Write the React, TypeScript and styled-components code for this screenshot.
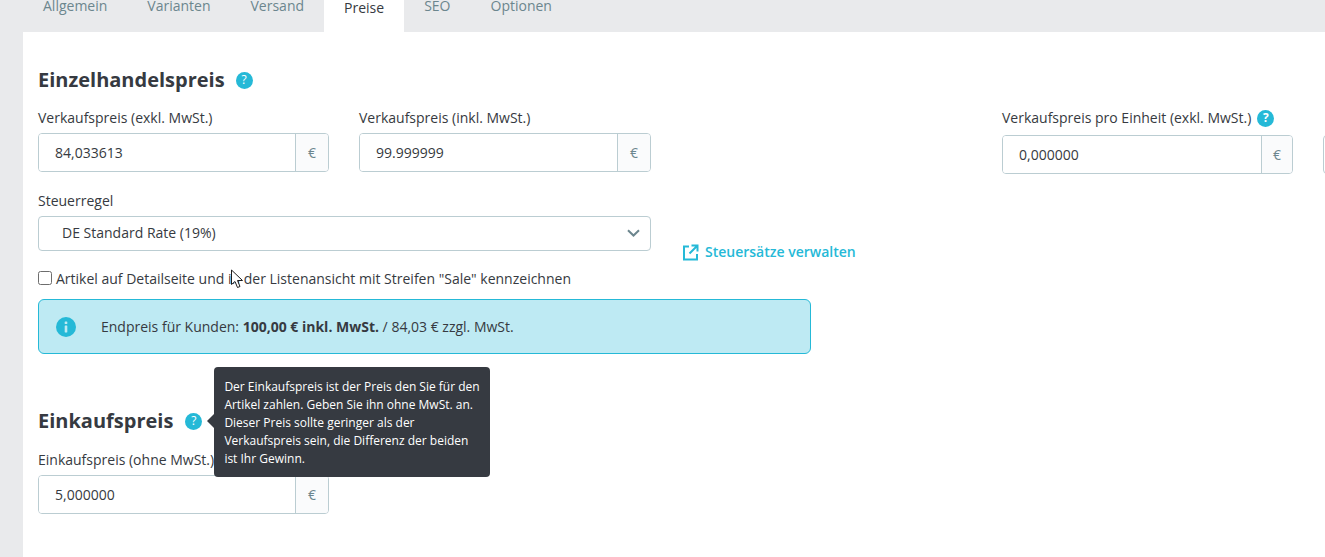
import styled, { createGlobalStyle } from "styled-components";

const GlobalStyle = createGlobalStyle`
  html, body {
    margin: 0;
    padding: 0;
    height: 557px;
    overflow: hidden;
    background: #e9eaec;
    font-family: "Open Sans", "Noto Sans", sans-serif;
    font-size: 14px;
    color: #363a41;
  }
`;

const Page = styled.div`
  width: 1325px;
  height: 557px;
  overflow: hidden;
  display: flex;
  flex-direction: column;
`;

const TabBar = styled.nav`
  display: flex;
  height: 32px;
  flex: none;
  padding-left: 23px;
  background: #e9eaec;
`;

const Tab = styled.a<{ $active?: boolean }>`
  display: block;
  height: 32px;
  padding: 0 20px;
  font-size: 14px;
  line-height: ${(p) => (p.$active ? "16px" : "11px")};
  color: ${(p) => (p.$active ? "#363a41" : "#6c868e")};
  background: ${(p) => (p.$active ? "#ffffff" : "transparent")};
`;

const Panel = styled.main`
  flex: 1;
  margin-left: 23px;
  padding: 36px 0 0 15px;
  background: #ffffff;
  overflow: hidden;
  position: relative;
`;

const HeadingRow = styled.div`
  display: flex;
  align-items: center;
  height: 24px;
`;

const Heading = styled.h2`
  margin: 0;
  font-size: 20px;
  line-height: 24px;
  font-weight: 700;
  color: #363a41;
`;

const HelpBadge = styled.span<{ $gap?: number; $bold?: boolean }>`
  position: relative;
  flex: none;
  display: inline-flex;
  align-items: center;
  justify-content: center;
  width: 17px;
  height: 17px;
  margin-left: ${(p) => p.$gap ?? 11}px;
  border-radius: 50%;
  background: #25b9d7;
  color: #ffffff;
  font-size: 12px;
  font-weight: ${(p) => (p.$bold ? 700 : 400)};
  line-height: 1;
`;

const PriceRow = styled.div`
  display: flex;
  margin-top: 14px;
  width: 1400px;
`;

const Field = styled.div<{ $offset?: number; $width?: number }>`
  flex: none;
  width: ${(p) => p.$width ?? 291}px;
  margin-left: ${(p) => p.$offset ?? 0}px;
`;

const Label = styled.label`
  display: flex;
  align-items: center;
  height: 24px;
  font-size: 14px;
  line-height: 18px;
  color: #363a41;
`;

const InputGroup = styled.div<{ $shift?: number }>`
  display: flex;
  height: 39px;
  margin-top: ${(p) => p.$shift ?? 3}px;
  border: 1px solid #bbcdd2;
  border-radius: 4px;
  box-sizing: border-box;
  overflow: hidden;
`;

const Value = styled.div`
  flex: 1;
  padding-left: 16px;
  font-size: 14px;
  line-height: 37px;
  color: #363a41;
  background: #ffffff;
`;

const Currency = styled.div<{ $narrow?: boolean }>`
  flex: none;
  width: ${(p) => (p.$narrow ? 30 : 32)}px;
  text-align: center;
  font-size: 14px;
  line-height: 37px;
  color: #6c868e;
  background: #fafbfc;
  border-left: 1px solid #bbcdd2;
`;

const TaxRow = styled.div`
  display: flex;
  align-items: flex-end;
  margin-top: 15px;
`;

const TaxField = styled.div`
  width: 613px;
`;

const Select = styled.div`
  display: flex;
  align-items: center;
  justify-content: space-between;
  box-sizing: border-box;
  height: 35px;
  margin-top: 3px;
  padding: 0 10px 2px 23px;
  border: 1px solid #bbcdd2;
  border-radius: 4px;
  font-size: 14px;
  color: #363a41;
  background: #ffffff;
`;

const ManageLink = styled.a`
  display: flex;
  align-items: center;
  gap: 6px;
  margin: 0 0 -12px 31px;
  font-size: 14px;
  line-height: 22px;
  font-weight: 600;
  color: #25b9d7;
`;

const CheckRow = styled.div`
  display: flex;
  align-items: center;
  height: 20px;
  margin-top: 17px;
  font-size: 14px;
  color: #363a41;
`;

const CheckBox = styled.span`
  flex: none;
  box-sizing: border-box;
  width: 14px;
  height: 14px;
  margin-right: 4px;
  border: 1px solid #6d6d6d;
  border-radius: 2.5px;
  background: #ffffff;
`;

const Alert = styled.div`
  display: flex;
  align-items: center;
  box-sizing: border-box;
  width: 773px;
  height: 55px;
  margin-top: 11px;
  padding-left: 17px;
  border: 1px solid #25b9d7;
  border-radius: 6px;
  background: #beeaf3;
  font-size: 14px;
  color: #363a41;
`;

const AlertText = styled.span`
  margin-left: 25px;

  strong {
    font-weight: 700;
  }
`;

const Section = styled.section`
  margin-top: 55px;
`;

const SectionField = styled.div`
  width: 291px;
  margin-top: 15px;
`;

const Tooltip = styled.div`
  position: absolute;
  left: 29px;
  top: -46px;
  box-sizing: border-box;
  width: 276px;
  height: 110px;
  padding: 11px 10px 0;
  border-radius: 4px;
  background: #363a41;
  color: #ffffff;
  font-size: 12px;
  line-height: 18px;
  font-weight: 400;
  white-space: nowrap;
  z-index: 5;

  &::before {
    content: "";
    position: absolute;
    left: -7px;
    top: 47px;
    border-style: solid;
    border-width: 7px 7px 7px 0;
    border-color: transparent #363a41 transparent transparent;
  }
`;

const Cursor = styled.svg`
  position: absolute;
  left: 207px;
  top: 237px;
  z-index: 6;
`;

const tabs = ["Allgemein", "Varianten", "Versand", "Preise", "SEO", "Optionen"];

function Chevron() {
  return (
    <svg width="13" height="8" viewBox="0 0 13 8" fill="none">
      <path d="M1 1.2 6.5 6.5 12 1.2" stroke="#6c868e" strokeWidth="2" />
    </svg>
  );
}

function ExternalIcon() {
  return (
    <svg width="17" height="17" viewBox="0 0 17 17" fill="none">
      <path
        d="M7 2.5H2V15.5H15V10M9.5 1.5H15.5V7.5M15 2 7.5 9.5"
        stroke="#25b9d7"
        strokeWidth="2"
      />
    </svg>
  );
}

function InfoIcon() {
  return (
    <svg width="20" height="20" viewBox="0 0 20 20">
      <circle cx="10" cy="10" r="10" fill="#25b9d7" />
      <rect x="8.7" y="4.5" width="2.6" height="2.6" rx="0.6" fill="#beeaf3" />
      <rect x="8.7" y="8.5" width="2.6" height="7" rx="0.4" fill="#beeaf3" />
    </svg>
  );
}

function PriceField({ label, value }: { label: string; value: string }) {
  return (
    <>
      <Label>{label}</Label>
      <InputGroup>
        <Value>{value}</Value>
        <Currency>€</Currency>
      </InputGroup>
    </>
  );
}

export default function App() {
  return (
    <Page>
      <GlobalStyle />
      <TabBar>
        {tabs.map((t) => (
          <Tab key={t} $active={t === "Preise"}>
            {t}
          </Tab>
        ))}
      </TabBar>
      <Panel>
        <HeadingRow>
          <Heading>Einzelhandelspreis</Heading>
          <HelpBadge>?</HelpBadge>
        </HeadingRow>

        <PriceRow>
          <Field>
            <PriceField label="Verkaufspreis (exkl. MwSt.)" value="84,033613" />
          </Field>
          <Field $offset={30} $width={292}>
            <PriceField label="Verkaufspreis (inkl. MwSt.)" value="99.999999" />
          </Field>
          <Field $offset={351}>
            <Label>
              Verkaufspreis pro Einheit (exkl. MwSt.)
              <HelpBadge $gap={6} $bold>?</HelpBadge>
            </Label>
            <InputGroup $shift={5}>
              <Value>0,000000</Value>
              <Currency $narrow>€</Currency>
            </InputGroup>
          </Field>
          <Field $offset={30}>
            <InputGroup $shift={29} />
          </Field>
        </PriceRow>

        <TaxRow>
          <TaxField>
            <Label>Steuerregel</Label>
            <Select>
              DE Standard Rate (19%)
              <Chevron />
            </Select>
          </TaxField>
          <ManageLink>
            <ExternalIcon />
            Steuersätze verwalten
          </ManageLink>
        </TaxRow>

        <CheckRow>
          <CheckBox />
          Artikel auf Detailseite und in der Listenansicht mit Streifen "Sale" kennzeichnen
        </CheckRow>

        <Alert>
          <InfoIcon />
          <AlertText>
            Endpreis für Kunden: <strong>100,00 € inkl. MwSt.</strong> / 84,03 € zzgl. MwSt.
          </AlertText>
        </Alert>

        <Section>
          <HeadingRow>
            <Heading>Einkaufspreis</Heading>
            <HelpBadge $gap={12}>
              ?
              <Tooltip>
                Der Einkaufspreis ist der Preis den Sie für den
                <br />
                Artikel zahlen. Geben Sie ihn ohne MwSt. an.
                <br />
                Dieser Preis sollte geringer als der
                <br />
                Verkaufspreis sein, die Differenz der beiden
                <br />
                ist Ihr Gewinn.
              </Tooltip>
            </HelpBadge>
          </HeadingRow>
          <SectionField>
            <PriceField label="Einkaufspreis (ohne MwSt.)" value="5,000000" />
          </SectionField>
        </Section>

        <Cursor width="15" height="20" viewBox="0 0 15 20">
          <path
            d="M1.5 1V15.5L5 12.5L7.5 18.5L10 17.5L7.5 11.5H12.5Z"
            fill="#ffffff"
            stroke="#1c1c1c"
            strokeWidth="1"
          />
        </Cursor>
      </Panel>
    </Page>
  );
}
